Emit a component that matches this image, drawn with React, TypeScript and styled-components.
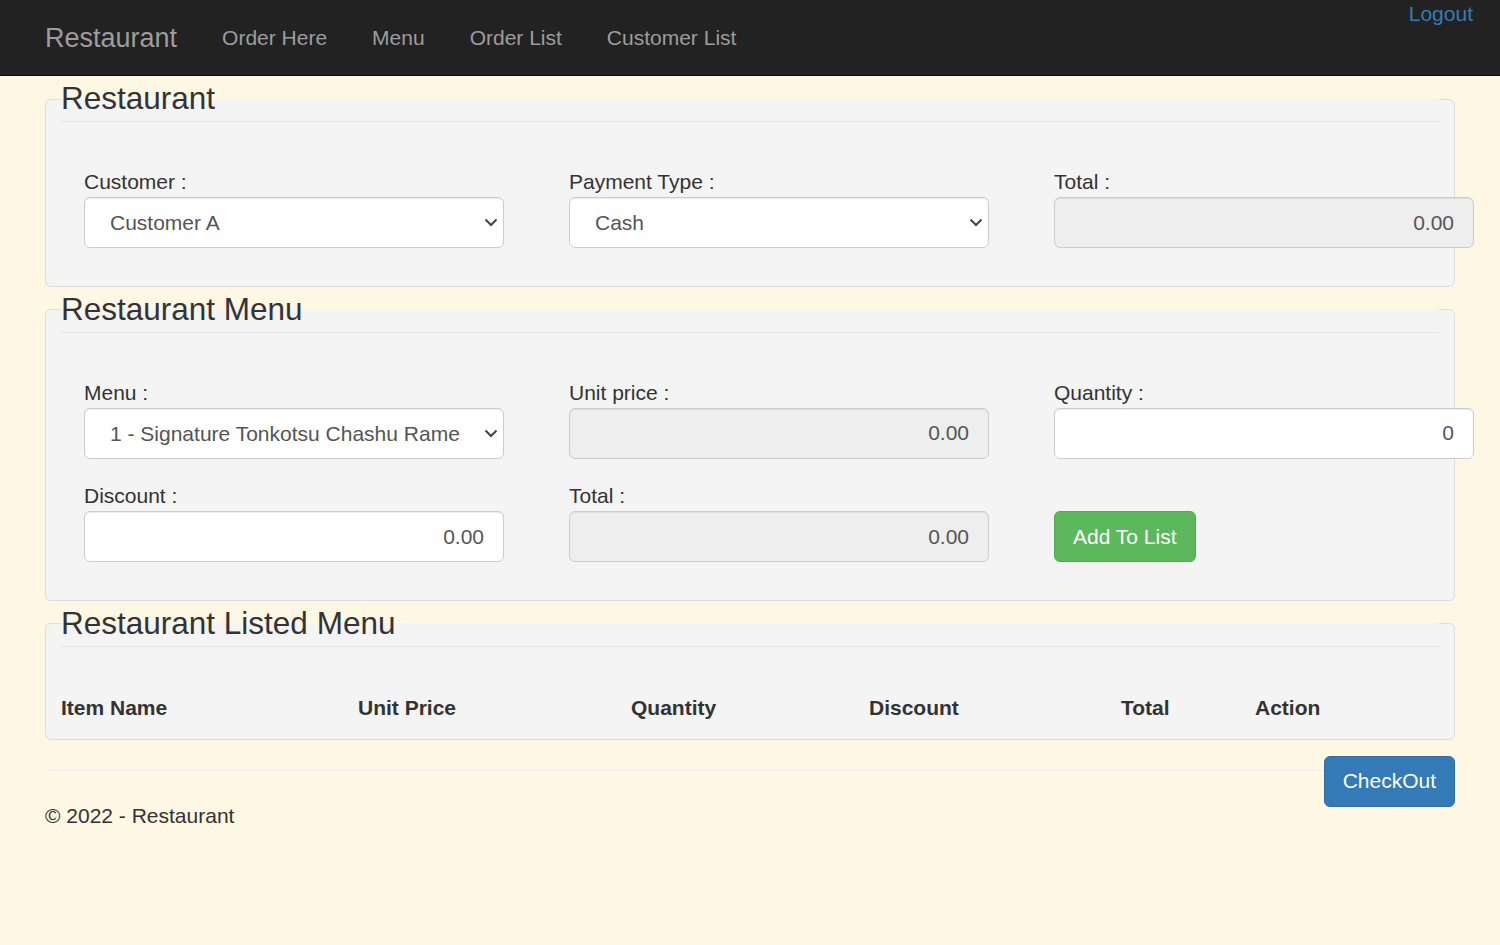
import styled, { createGlobalStyle } from 'styled-components'

const GlobalStyle = createGlobalStyle`
  html, body {
    margin: 0;
    padding: 0;
    background: #fdf7e4;
  }
  body {
    font-family: "Liberation Sans", Arial, Helvetica, sans-serif;
    font-size: 21px;
    line-height: 30px;
    color: #333;
  }
  * {
    box-sizing: border-box;
  }
`

const columns = [
  { label: 'Item Name', width: 297 },
  { label: 'Unit Price', width: 273 },
  { label: 'Quantity', width: 238 },
  { label: 'Discount', width: 252 },
  { label: 'Total', width: 134 },
  { label: 'Action', width: undefined },
]

const Chevron = () => (
  <svg width="14" height="9" viewBox="0 0 14 9" fill="none">
    <polyline points="1.5,1.5 7,7 12.5,1.5" stroke="#444" strokeWidth="2" />
  </svg>
)

const SelectField = ({ value, options }: { value: string; options: string[] }) => (
  <SelectWrap>
    <Select defaultValue={value}>
      {options.map((o) => (
        <option key={o}>{o}</option>
      ))}
    </Select>
    <Caret>
      <Chevron />
    </Caret>
  </SelectWrap>
)

const App = () => {
  return (
    <>
      <GlobalStyle />
      <Navbar>
        <Brand>Restaurant</Brand>
        <NavLinks>
          <NavLink>Order Here</NavLink>
          <NavLink>Menu</NavLink>
          <NavLink>Order List</NavLink>
          <NavLink>Customer List</NavLink>
        </NavLinks>
        <Logout>Logout</Logout>
      </Navbar>

      <Container>
        <Fieldset>
          <Legend>Restaurant</Legend>
          <FormRow>
            <FormGroup>
              <Label>Customer :</Label>
              <SelectField value="Customer A" options={['Customer A', 'Customer B']} />
            </FormGroup>
            <FormGroup>
              <Label>Payment Type :</Label>
              <SelectField value="Cash" options={['Cash', 'Card']} />
            </FormGroup>
            <FormGroup>
              <Label>Total :</Label>
              <Input readOnly disabled value="0.00" />
            </FormGroup>
          </FormRow>
        </Fieldset>

        <Fieldset>
          <Legend>Restaurant Menu</Legend>
          <FormRow>
            <FormGroup>
              <Label>Menu :</Label>
              <SelectField
                value="1 - Signature Tonkotsu Chashu Ramen"
                options={['1 - Signature Tonkotsu Chashu Ramen']}
              />
            </FormGroup>
            <FormGroup>
              <Label>Unit price :</Label>
              <Input readOnly disabled value="0.00" />
            </FormGroup>
            <FormGroup>
              <Label>Quantity :</Label>
              <Input defaultValue="0" />
            </FormGroup>
            <FormGroup>
              <Label>Discount :</Label>
              <Input defaultValue="0.00" />
            </FormGroup>
            <FormGroup>
              <Label>Total :</Label>
              <Input readOnly disabled value="0.00" />
            </FormGroup>
            <FormGroup>
              <ButtonSpacer />
              <Button $variant="success">Add To List</Button>
            </FormGroup>
          </FormRow>
        </Fieldset>

        <Fieldset $compact>
          <Legend>Restaurant Listed Menu</Legend>
          <Table>
            <colgroup>
              {columns.map((c) => (
                <col key={c.label} style={c.width ? { width: c.width } : undefined} />
              ))}
            </colgroup>
            <thead>
              <tr>
                {columns.map((c) => (
                  <Th key={c.label}>{c.label}</Th>
                ))}
              </tr>
            </thead>
            <tbody />
          </Table>
        </Fieldset>

        <CheckoutBar>
          <Button $variant="primary">CheckOut</Button>
        </CheckoutBar>
        <Rule />
        <Footer>© 2022 - Restaurant</Footer>
      </Container>
    </>
  )
}

export default App

const Navbar = styled.nav`
  display: flex;
  align-items: flex-start;
  height: 76px;
  padding: 0 27px 0 45px;
  background: #222;
  border-bottom: 1px solid #080808;
`

const Brand = styled.a`
  font-size: 27px;
  line-height: 30px;
  padding: 22.5px 22.5px 22.5px 0;
  color: #9d9d9d;
`

const NavLinks = styled.div`
  display: flex;
  flex: 1;
`

const NavLink = styled.a`
  font-size: 21px;
  line-height: 30px;
  padding: 22.5px;
  color: #9d9d9d;
`

const Logout = styled.a`
  font-size: 21px;
  line-height: 28px;
  color: #337ab7;
`

const Container = styled.div`
  width: 1410px;
  margin: 0 auto;
`

const Fieldset = styled.fieldset<{ $compact?: boolean }>`
  margin: 0;
  min-width: 0;
  padding: 0 15px ${(p) => (p.$compact ? '16px' : '15px')};
  background: #f4f4f4;
  border: 1px solid #ddd;
  border-radius: 6px;
`

const Legend = styled.legend`
  display: block;
  width: 100%;
  padding: 0;
  margin: 0;
  font-size: 31.5px;
  line-height: 45px;
  color: #333;
  border-bottom: 1px solid #e5e5e5;
`

const FormRow = styled.div`
  display: grid;
  grid-template-columns: repeat(3, 485px);
  padding-top: 45px;
  width: 1455px;
`

const FormGroup = styled.div`
  padding-left: 23px;
  margin-bottom: 22.5px;
`

const Label = styled.label`
  display: block;
  font-size: 21px;
  line-height: 30px;
  color: #333;
`

const ButtonSpacer = styled.div`
  height: 30px;
`

const controlBase = `
  display: block;
  width: 420px;
  height: 51px;
  font-family: "Liberation Sans", Arial, Helvetica, sans-serif;
  font-size: 21px;
  color: #555;
  background: #fff;
  border: 1px solid #ccc;
  border-radius: 6px;
  box-shadow: inset 0 1px 1px rgba(0, 0, 0, 0.075);
  outline: none;
`

const Input = styled.input`
  ${controlBase}
  padding: 9px 19px;
  text-align: right;

  &:disabled {
    background: #eee;
    color: #555;
    -webkit-text-fill-color: #555;
    opacity: 1;
  }
`

const SelectWrap = styled.div`
  position: relative;
  width: 420px;
`

const Select = styled.select`
  ${controlBase}
  appearance: none;
  padding: 9px 42px 9px 25px;
  white-space: nowrap;
  overflow: hidden;
  text-overflow: clip;
`

const Caret = styled.span`
  position: absolute;
  right: 6px;
  top: 21px;
  display: flex;
  pointer-events: none;
`

const Button = styled.button<{ $variant: 'success' | 'primary' }>`
  height: 51px;
  padding: 9px 18px;
  font-family: "Liberation Sans", Arial, Helvetica, sans-serif;
  font-size: 21px;
  line-height: 30px;
  color: #fff;
  border-radius: 6px;
  cursor: pointer;
  background: ${(p) => (p.$variant === 'success' ? '#5cb85c' : '#337ab7')};
  border: 1px solid ${(p) => (p.$variant === 'success' ? '#4cae4c' : '#2e6da4')};
`

const Table = styled.table`
  width: 100%;
  table-layout: fixed;
  border-collapse: collapse;
  margin-top: 46px;
`

const Th = styled.th`
  padding: 0;
  text-align: left;
  font-size: 21px;
  line-height: 30px;
  font-weight: bold;
  color: #333;
`

const CheckoutBar = styled.div`
  float: right;
  margin-top: 16px;
`

const Rule = styled.hr`
  margin: 30px 0;
  border: 0;
  border-top: 1px solid #eee;
`

const Footer = styled.p`
  margin: 0;
  font-size: 21px;
  line-height: 30px;
  color: #333;
`
